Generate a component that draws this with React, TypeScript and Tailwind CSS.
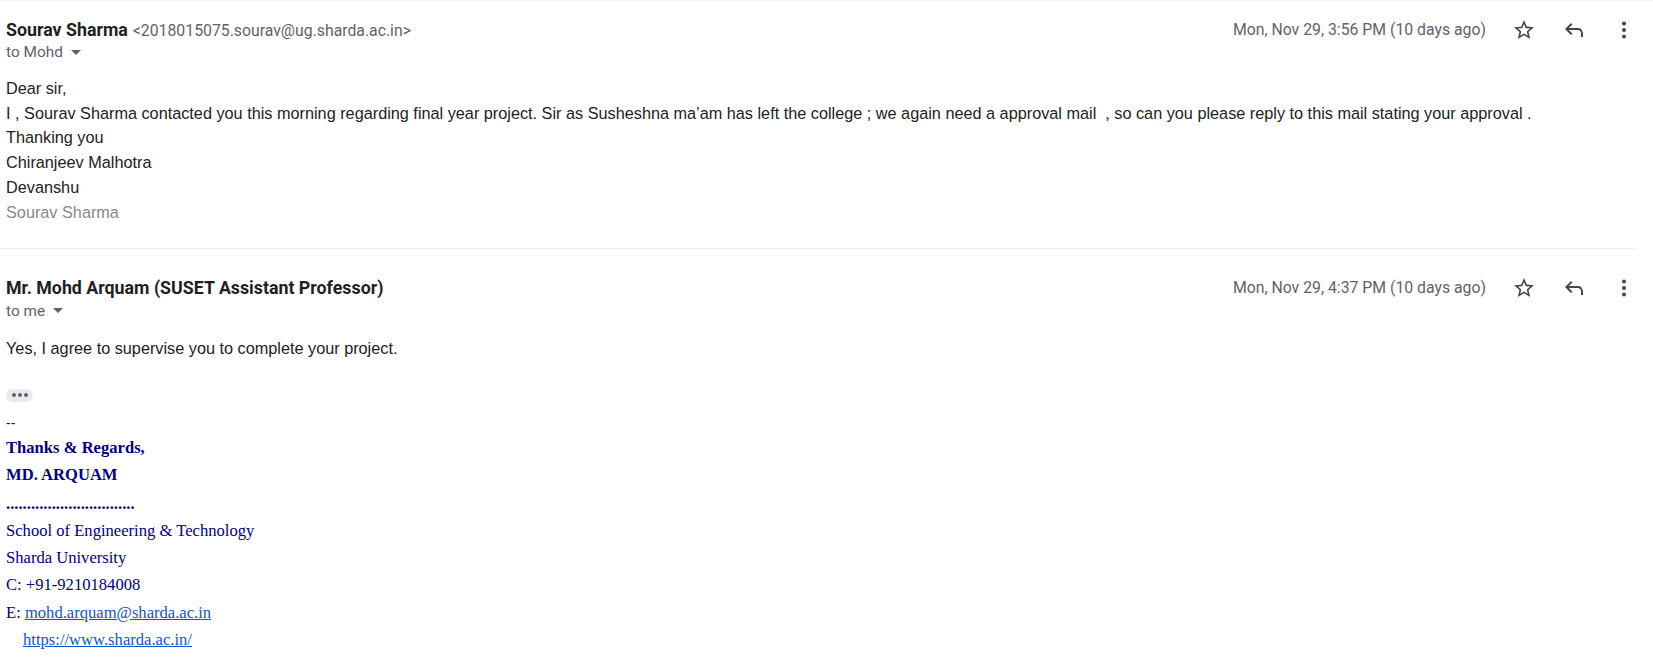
import React from "react";

const roboto = "font-['Roboto','Liberation_Sans',sans-serif]";
const arial = "font-['Liberation_Sans',Arial,sans-serif]";
const times = "font-['Liberation_Serif','Times_New_Roman',serif]";

function StarIcon() {
  return (
    <svg width="24" height="24" viewBox="0 0 24 24" fill="#444746">
      <path d="M22 9.24l-7.19-.62L12 2 9.19 8.63 2 9.24l5.46 4.73L5.82 21 12 17.27 18.18 21l-1.63-7.03L22 9.24zM12 15.4l-3.76 2.27 1-4.28-3.32-2.88 4.38-.38L12 6.1l1.71 4.04 4.38.38-3.32 2.88 1 4.28L12 15.4z" />
    </svg>
  );
}

function ReplyIcon() {
  return (
    <svg width="24" height="24" viewBox="0 0 24 24" fill="#444746">
      <path d="M19 19v-4q0-1.25-.875-2.125T16 12H6.825l3.6 3.6L9 17l-6-6 6-6 1.425 1.4-3.6 3.6H16q2.075 0 3.538 1.463Q21 13.925 21 16v3Z" />
    </svg>
  );
}

function MoreIcon() {
  return (
    <svg width="24" height="24" viewBox="0 0 24 24" fill="#444746">
      <circle cx="12" cy="5.5" r="2" />
      <circle cx="12" cy="12" r="2" />
      <circle cx="12" cy="18.5" r="2" />
    </svg>
  );
}

function Caret() {
  return (
    <svg width="10" height="6" viewBox="0 0 10 6" className="ml-[8px]">
      <path d="M0 0h10L5 5z" fill="#5f6368" />
    </svg>
  );
}

function Header({ name, email, to, date }: { name: string; email?: string; to: string; date: string }) {
  return (
    <div className="flex items-start justify-between">
      <div>
        <div className={`${roboto} flex items-baseline h-[20px] leading-[20px]`}>
          <span className="text-[17.8px] font-bold text-[#1f1f1f]">{name}</span>
          {email ? <span className="ml-[5px] text-[15.8px] text-[#5f6368]">{email}</span> : null}
        </div>
        <div className={`${roboto} mt-[3px] flex items-center h-[20px] text-[15.4px] text-[#5f6368]`}>
          {to}
          <Caret />
        </div>
      </div>
      <div className="flex items-center h-[20px] pr-[17px]">
        <span className={`${roboto} text-[15.8px] text-[#5f6368] mr-[26px]`}>{date}</span>
        <div className="flex items-center gap-[26px]">
          <StarIcon />
          <ReplyIcon />
          <MoreIcon />
        </div>
      </div>
    </div>
  );
}

export default function App() {
  return (
    <div className="min-h-[668px] bg-white border-t border-[#f1f1f1]">
      {/* first message */}
      <div className="pl-[6px] pt-[19px]">
        <Header
          name="Sourav Sharma"
          email="<2018015075.sourav@ug.sharda.ac.in>"
          to="to Mohd"
          date="Mon, Nov 29, 3:56 PM (10 days ago)"
        />
        <div className={`${arial} mt-[13px] text-[16.25px] leading-[24.7px] text-[#222]`}>
          <div>Dear sir,</div>
          <div className="whitespace-pre">
            I , Sourav Sharma contacted you this morning regarding final year project. Sir as Susheshna ma’am has left the college ; we again need a approval mail  , so can you please reply to this mail stating your approval .
          </div>
          <div>Thanking you</div>
          <div>Chiranjeev Malhotra</div>
          <div>Devanshu</div>
          <div className="text-[#888]">Sourav Sharma</div>
        </div>
      </div>

      <div className="mt-[24px] mr-[17px] h-px bg-[#ececec]" />

      {/* second message */}
      <div className="pl-[6px] pt-[29px]">
        <Header
          name="Mr. Mohd Arquam (SUSET Assistant Professor)"
          to="to me"
          date="Mon, Nov 29, 4:37 PM (10 days ago)"
        />
        <div className={`${arial} mt-[15px] text-[16.25px] leading-[24.5px] text-[#222]`}>
          Yes, I agree to supervise you to complete your project.
        </div>
        <div className="mt-[28px] flex h-[13px] w-[27px] items-center justify-center gap-[2px] rounded-full bg-[#e8eaed]">
          <span className="h-[4px] w-[4px] rounded-full bg-[#5f6368]" />
          <span className="h-[4px] w-[4px] rounded-full bg-[#5f6368]" />
          <span className="h-[4px] w-[4px] rounded-full bg-[#5f6368]" />
        </div>
        <div className="mt-[8px] leading-[27px]">
          <div className={`${arial} text-[14px] text-[#222]`}>--</div>
          <div className={`${times} -mt-[3px] text-[16.6px] text-[#000080]`}>
            <div className="font-bold">Thanks &amp; Regards,</div>
            <div className="font-bold">MD. ARQUAM</div>
            <div className="mt-[2px] font-bold">...............................</div>
            <div>School of Engineering &amp; Technology</div>
            <div>Sharda University</div>
            <div>C: +91-9210184008</div>
            <div className="mt-[1px]">
              E: <a className="text-[#1155cc] underline" href="#">mohd.arquam@sharda.ac.in</a>
            </div>
            <div className="pl-[17px]">
              <a className="text-[#1155cc] underline" href="#">https://www.sharda.ac.in/</a>
            </div>
          </div>
        </div>
      </div>
    </div>
  );
}
